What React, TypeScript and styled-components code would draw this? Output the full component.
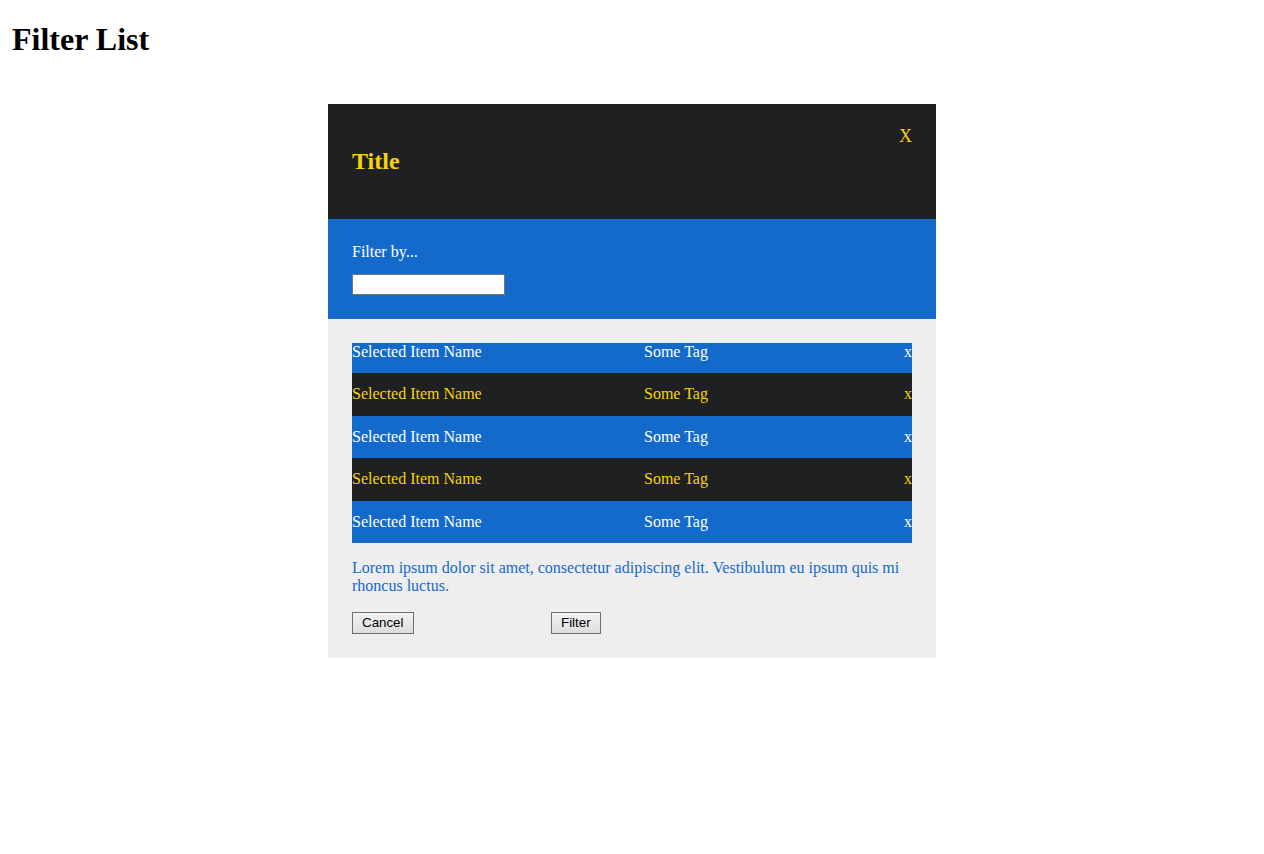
import React from "react";
import styled, { createGlobalStyle } from "styled-components";

const DARK = "#1f2022";
const BLUE = "#146acb";
const YELLOW = "#f8d20c";
const LIGHT = "#eeeeee";

const GlobalStyle = createGlobalStyle`
  body {
    margin: 0 12px;
    font-family: "Liberation Serif", "Times New Roman", serif;
    line-height: 1.15;
    background: #ffffff;
    color: #000000;
  }
`;

const PageTitle = styled.h1`
  font-size: 32px;
  font-weight: bold;
  margin: 21.44px 0;
`;

const Stage = styled.div`
  padding: 24px 0;
`;

const Modal = styled.section`
  width: 608px;
  margin: 0 auto;
  font-size: 16px;
`;

const Header = styled.header`
  position: relative;
  background: ${DARK};
  padding: 24px;
`;

const Title = styled.h2`
  margin: 19.92px 0;
  font-size: 24px;
  font-weight: bold;
  color: ${YELLOW};
`;

const CloseButton = styled.button`
  position: absolute;
  top: 22px;
  right: 24px;
  padding: 0;
  border: 0;
  background: none;
  font-family: "Liberation Serif", "Times New Roman", serif;
  font-size: 18px;
  line-height: 1.15;
  color: ${YELLOW};
  cursor: pointer;
`;

const FilterBar = styled.div`
  background: ${BLUE};
  padding: 24px;
  color: #ffffff;
`;

const FilterLabel = styled.label`
  display: block;
  margin-bottom: 12.6px;
`;

const FilterInput = styled.input`
  display: block;
  box-sizing: border-box;
  width: 153px;
  height: 21px;
  margin: 0;
  padding: 1px 2px;
  border: 1px solid #767676;
  background: #ffffff;
  font-family: "Liberation Sans", Arial, sans-serif;
  font-size: 13.33px;
`;

const Body = styled.div`
  background: ${LIGHT};
  padding: 24px;
`;

const List = styled.ul`
  list-style: none;
  margin: 0;
  padding: 0;
`;

const Row = styled.li<{ $dark: boolean }>`
  display: grid;
  grid-template-columns: 292px 1fr auto;
  padding: 12px 0;
  background: ${(p) => (p.$dark ? DARK : BLUE)};
  color: ${(p) => (p.$dark ? YELLOW : "#ffffff")};

  &:first-child {
    padding-top: 0;
  }
`;

const RemoveMark = styled.span`
  cursor: pointer;
`;

const Note = styled.p`
  margin: 16px 0;
  color: ${BLUE};
`;

const Actions = styled.div`
  display: grid;
  grid-template-columns: 199px auto;
  justify-items: start;
`;

const ActionButton = styled.button`
  box-sizing: border-box;
  height: 22px;
  margin: 0;
  padding: 0 9px;
  border: 1px solid #707070;
  border-radius: 0;
  background: linear-gradient(#f3f3f3, #dddddd);
  font-family: "Liberation Sans", Arial, sans-serif;
  font-size: 13.33px;
  line-height: 1.15;
  color: #000000;
  cursor: pointer;
`;

const items = Array.from({ length: 5 }, (_, i) => ({
  id: i,
  name: "Selected Item Name",
  tag: "Some Tag",
}));

export default function App() {
  return (
    <>
      <GlobalStyle />
      <PageTitle>Filter List</PageTitle>
      <Stage>
        <Modal>
          <Header>
            <CloseButton>X</CloseButton>
            <Title>Title</Title>
          </Header>
          <FilterBar>
            <FilterLabel htmlFor="filter">Filter by...</FilterLabel>
            <FilterInput id="filter" type="text" />
          </FilterBar>
          <Body>
            <List>
              {items.map((item) => (
                <Row key={item.id} $dark={item.id % 2 === 1}>
                  <span>{item.name}</span>
                  <span>{item.tag}</span>
                  <RemoveMark>x</RemoveMark>
                </Row>
              ))}
            </List>
            <Note>
              Lorem ipsum dolor sit amet, consectetur adipiscing elit. Vestibulum eu ipsum quis mi
              rhoncus luctus.
            </Note>
            <Actions>
              <ActionButton>Cancel</ActionButton>
              <ActionButton>Filter</ActionButton>
            </Actions>
          </Body>
        </Modal>
      </Stage>
    </>
  );
}
